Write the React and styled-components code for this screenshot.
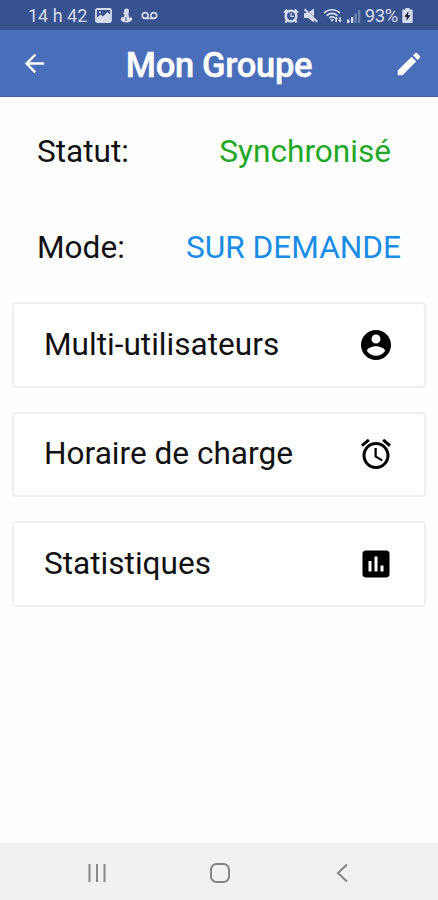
import { styled, createGlobalStyle } from "styled-components";
import { MdArrowBack, MdEdit, MdAccessAlarm } from "react-icons/md";

const menu = [
  { label: "Multi-utilisateurs", icon: <AccountIcon /> },
  { label: "Horaire de charge", icon: <MdAccessAlarm /> },
  { label: "Statistiques", icon: <ChartIcon /> },
];

function App() {
  return (
    <Screen>
      <GlobalStyle />
      <StatusBar>
        <StatusGroup $gap={8}>
          <Clock>14 h 42</Clock>
          <PictureIcon />
          <AnchorIcon />
          <VoicemailIcon />
        </StatusGroup>
        <StatusGroup $gap={4}>
          <AlarmIcon />
          <MutedIcon />
          <WifiIcon />
          <SignalIcon />
          <Battery>93%</Battery>
          <BatteryIcon />
        </StatusGroup>
      </StatusBar>

      <Header>
        <IconButton aria-label="Retour" $size={29}>
          <MdArrowBack />
        </IconButton>
        <Title>Mon Groupe</Title>
        <IconButton aria-label="Modifier" $size={30}>
          <MdEdit />
        </IconButton>
      </Header>

      <Content>
        <InfoRow $end={47}>
          <Label>Statut:</Label>
          <Value $color="#22a826">Synchronisé</Value>
        </InfoRow>
        <InfoRow $end={37}>
          <Label>Mode:</Label>
          <Value $color="#188ce6">SUR DEMANDE</Value>
        </InfoRow>

        <Menu>
          {menu.map((item) => (
            <Card key={item.label}>
              <Label>{item.label}</Label>
              {item.icon}
            </Card>
          ))}
        </Menu>
      </Content>

      <NavBar>
        <NavButton aria-label="Applications récentes">
          <svg width="20" height="20" viewBox="0 0 20 20">
            <path d="M2.5 1v18M10 1v18M17.5 1v18" />
          </svg>
        </NavButton>
        <NavButton aria-label="Accueil">
          <svg width="20" height="20" viewBox="0 0 20 20">
            <rect x="1" y="1" width="18" height="18" rx="5.5" />
          </svg>
        </NavButton>
        <NavButton aria-label="Précédent">
          <svg width="20" height="20" viewBox="0 0 20 20">
            <path d="M15 1.5L6 10l9 8.5" />
          </svg>
        </NavButton>
      </NavBar>
    </Screen>
  );
}

export default App;

function AccountIcon() {
  return (
    <svg viewBox="0 0 24 24" fill="currentColor">
      <path d="M12 2C6.48 2 2 6.48 2 12s4.48 10 10 10 10-4.48 10-10S17.52 2 12 2zm0 3c1.66 0 3 1.34 3 3s-1.34 3-3 3-3-1.34-3-3 1.34-3 3-3zm0 14.2c-2.5 0-4.71-1.28-6-3.22.03-1.99 4-3.08 6-3.08 1.99 0 5.97 1.09 6 3.08-1.29 1.94-3.5 3.22-6 3.22z" />
    </svg>
  );
}

function ChartIcon() {
  return (
    <svg viewBox="0 0 24 24" fill="currentColor">
      <path d="M19 3H5c-1.1 0-2 .9-2 2v14c0 1.1.9 2 2 2h14c1.1 0 2-.9 2-2V5c0-1.1-.9-2-2-2zM9 17H7v-7h2v7zm4 0h-2V7h2v10zm4 0h-2v-4h2v4z" />
    </svg>
  );
}

function PictureIcon() {
  return (
    <svg width="17" height="15" viewBox="0 0 17 15">
      <rect x="1" y="1" width="15" height="13" rx="1.5" fill="none" stroke="currentColor" strokeWidth="1.8" />
      <path d="M2 13V9.5l3.5-3 2.5 2L12.5 4 15 6.5V13z" fill="currentColor" />
      <circle cx="5" cy="4.3" r="1" fill="currentColor" />
    </svg>
  );
}

function AnchorIcon() {
  return (
    <svg width="13" height="15" viewBox="0 0 13 15" fill="currentColor">
      <path d="M6.5.5A2.5 2.5 0 0 1 8.800 3.500L8.500 6.500l.8 4 1.200-2 2 2.500c-1 2.300-3 3.500-6 3.500-2.700 0-5-.8-6-3l1.500-2.700 1.500.7L4.500 7l-1.300-1.500 1-2A2.500 2.500 0 0 1 6.500.5z" />
      <path d="M6 9v4" stroke="#38528f" strokeWidth="0.9" />
    </svg>
  );
}

function VoicemailIcon() {
  return (
    <svg width="17" height="10" viewBox="0 0 17 10" fill="none" stroke="currentColor" strokeWidth="1.6">
      <circle cx="4.2" cy="4.5" r="2.9" />
      <circle cx="12.8" cy="4.5" r="2.9" />
      <path d="M4.2 7.4h8.6" />
    </svg>
  );
}

function AlarmIcon() {
  return (
    <svg width="16" height="16" viewBox="0 0 16 16">
      <path d="M1.2 4.8L4.2 1.5M14.8 4.8L11.8 1.5M4 12l-1.5 2.5M12 12l1.5 2.5" stroke="currentColor" strokeWidth="2.4" />
      <circle cx="8" cy="8" r="5.3" fill="none" stroke="currentColor" strokeWidth="2.6" />
      <path d="M8 5v3.300h3" fill="none" stroke="currentColor" strokeWidth="1.3" />
    </svg>
  );
}

function MutedIcon() {
  return (
    <svg width="16" height="15" viewBox="0 0 16 15">
      <path d="M1 5h3.500L11 .5v14L5 10H1z" fill="currentColor" />
      <path d="M2.800 1l12 12" stroke="#38528f" strokeWidth="0.8" />
      <path d="M1.500 1.200l12.800 12.600" stroke="currentColor" strokeWidth="1.9" />
    </svg>
  );
}

function WifiIcon() {
  return (
    <svg width="20" height="16" viewBox="0 0 20 16">
      <path d="M1 5.200c4.500-4.600 11.500-4.600 16 0M3.700 7.600c3-3 7.600-3 10.600 0M6.300 10c1.500-1.500 3.900-1.500 5.400 0" fill="none" stroke="currentColor" strokeWidth="1.7" />
      <path d="M7 11.200h4L9 13.800zM13.200 8.500l2 2.600h-1.200v2.900h-1.600v-2.900h-1.200zM17 14.500l-2-2.600h1.200V9.200h1.600v2.700H19z" fill="currentColor" />
    </svg>
  );
}

function SignalIcon() {
  return (
    <svg width="14" height="14" viewBox="0 0 14 14" fill="currentColor">
      <path d="M0 10.500h2.500V14H0zM4 8h2.300v6H4z" />
      <path d="M7.500 4.500h2.300V14H7.500zM11 1h2.300v13H11z" opacity="0.35" />
    </svg>
  );
}

function BatteryIcon() {
  return (
    <svg width="11" height="15" viewBox="0 0 11 15">
      <path d="M3.500 0h4v1.500H10q.7 0 .7.700v12q0 .7-.7.700H1q-.7 0-.7-.7v-12q0-.7.7-.7h2.500z" fill="currentColor" />
      <path d="M6.500 3.200L2.300 8.700h2.500l-.5 4.100 4.300-5.500H6z" fill="#101a30" />
    </svg>
  );
}

const GlobalStyle = createGlobalStyle`
  * {
    box-sizing: border-box;
  }
  body {
    margin: 0;
    background: #fefefe;
    font-family: Roboto, "Liberation Sans", sans-serif;
  }
`;

const Screen = styled.div`
  display: flex;
  flex-direction: column;
  width: 100%;
  height: 900px;
  overflow: hidden;
`;

const StatusBar = styled.div`
  display: flex;
  justify-content: space-between;
  height: 30px;
  padding: 1px 25px 0 28px;
  background: #38528f;
  color: #d5dcee;
`;

const StatusGroup = styled.div`
  display: flex;
  align-items: center;
  gap: ${({ $gap }) => $gap}px;

  svg {
    flex: none;
  }
`;

const Clock = styled.span`
  font-size: 18px;
`;

const Battery = styled.span`
  font-size: 18.5px;
  letter-spacing: -0.4px;
`;

const Header = styled.header`
  display: flex;
  align-items: center;
  justify-content: space-between;
  height: 67px;
  padding: 1px 14px 0 20px;
  background: #4a6eba;
  border-bottom: 1px solid #3d5f9f;
  color: #fff;
`;

const IconButton = styled.button`
  display: flex;
  padding: 0;
  border: 0;
  background: none;
  color: inherit;

  svg {
    width: ${({ $size }) => $size}px;
    height: ${({ $size }) => $size}px;
  }
`;

const Title = styled.h1`
  margin: 2px 5px 0 0;
  font-size: 34.5px;
  font-weight: 500;
  letter-spacing: -0.3px;
  -webkit-text-stroke: 0.5px #fff;
`;

const Content = styled.main`
  flex: 1;
  padding-top: 7px;
`;

const InfoRow = styled.div`
  display: flex;
  align-items: center;
  justify-content: space-between;
  height: 96px;
  padding: 0 ${({ $end }) => $end}px 0 37px;
`;

const Label = styled.span`
  color: #111;
  font-size: 31.6px;
  line-height: 40px;
`;

const Value = styled(Label)`
  color: ${({ $color }) => $color};
`;

const Menu = styled.div`
  display: grid;
  gap: 24px;
  padding: 6px 12px 0;
`;

const Card = styled.div`
  display: flex;
  align-items: center;
  justify-content: space-between;
  height: 85.5px;
  padding: 0 30px;
  border: 2px solid #efefef;
  border-radius: 4px;
  background: #fff;

  svg {
    width: 36px;
    height: 36px;
    color: #000;
  }
`;

const NavBar = styled.nav`
  display: flex;
  justify-content: space-between;
  height: 57px;
  padding: 0 86px 0 87px;
  background: #f1f1f1;
`;

const NavButton = styled.button`
  display: flex;
  align-items: center;
  padding: 2px 0 0;
  border: 0;
  background: none;

  svg {
    fill: none;
    stroke: #858585;
    stroke-width: 2;
  }
`;
